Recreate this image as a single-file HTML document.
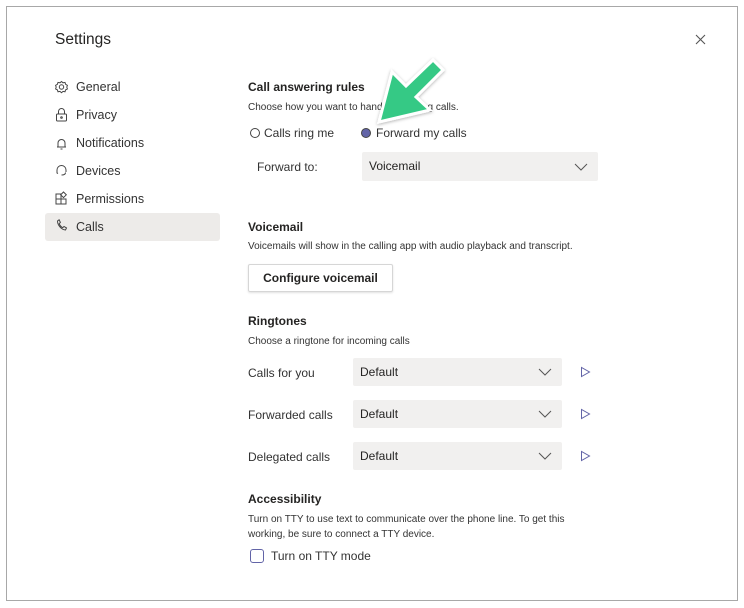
<!DOCTYPE html>
<html><head><style>
*{margin:0;padding:0;box-sizing:border-box}
body{width:744px;height:608px;background:#fff;font-family:"Liberation Sans",sans-serif;color:#252423;position:relative;overflow:hidden}
.frame{position:absolute;left:6px;top:6px;width:732px;height:595px;border:1px solid #a8a8a8}
.a{position:absolute;white-space:nowrap}
.nav{font-size:12.5px;color:#333}
.h{font-size:12px;font-weight:bold;color:#252423}
.s{font-size:10px;color:#333}
.l{font-size:12px;color:#333}
.dd{position:absolute;background:#f1f0ef;border-radius:2px;font-size:12px;color:#252423;padding-left:7px}
.dd svg{position:absolute;right:10px;top:50%;margin-top:-4px}
</style></head><body>
<div class="frame"></div>
<div class="a" style="left:55px;top:31px;font-size:15.5px;color:#252423">Settings</div>
<svg class="a" style="left:695px;top:34px" width="11" height="11"><path d="M1 1L10 10M10 1L1 10" stroke="#555" stroke-width="1.1"/></svg>

<div class="a" style="left:45px;top:213px;width:175px;height:28px;background:#edebe9;border-radius:3px"></div>
<svg class="a" style="left:54px;top:79px" width="16" height="160" fill="none" stroke="#444" stroke-width="1">
<circle cx="7.5" cy="8" r="2.2"/><path d="M7.5 2.5l1.5 1.3 2-.4.6 1.9 1.8 1-.6 1.8.6 1.8-1.8 1-.6 1.9-2-.4-1.5 1.3-1.5-1.3-2 .4-.6-1.9-1.8-1 .6-1.8-.6-1.8 1.8-1 .6-1.9 2 .4z"/>
<rect x="2.5" y="35" width="10" height="7" rx="1"/><path d="M4.5 35v-2.5a3 3 0 0 1 6 0V35"/><circle cx="7.5" cy="38.5" r=".8"/>
<path d="M3 68h9M4 68v-4a3.5 3.5 0 0 1 7 0v4M6.5 70h2"/>
<path d="M3 91a4.5 4.5 0 0 1 9 0v2M3 91v3l1 .5M11.5 93.5c0 1.5-1.5 2.5-4 2.5"/>
<rect x="2" y="120" width="5" height="5"/><rect x="2" y="115" width="5" height="5"/><rect x="7" y="120" width="5" height="5"/><path d="M9.5 113l2.8 2.8-2.8 2.8-2.8-2.8z"/>
<path d="M3.5 142c0 4 3.5 8.5 8 9l1-2-2.5-1.5-1.3 1.2c-1.5-.8-3-2.6-3.5-4l1.2-1.3-1.3-2.6z"/>
</svg>
<div class="a nav" style="left:76px;top:80px">General</div>
<div class="a nav" style="left:76px;top:108px">Privacy</div>
<div class="a nav" style="left:76px;top:136px">Notifications</div>
<div class="a nav" style="left:76px;top:164px">Devices</div>
<div class="a nav" style="left:76px;top:192px">Permissions</div>
<div class="a nav" style="left:76px;top:220px">Calls</div>

<div class="a h" style="left:248px;top:80px">Call answering rules</div>
<div class="a s" style="left:248px;top:102px">Choose how you want to handle incoming calls.</div>
<div class="a" style="left:250px;top:128px;width:10px;height:10px;border:1px solid #444;border-radius:50%"></div>
<div class="a l" style="left:264px;top:126px">Calls ring me</div>
<div class="a" style="left:361px;top:128px;width:10px;height:10px;border:1px solid #444;border-radius:50%;background:#6264a7"></div>
<div class="a l" style="left:376px;top:126px">Forward my calls</div>
<div class="a l" style="left:257px;top:160px">Forward to:</div>
<div class="dd" style="left:362px;top:152px;width:236px;height:29px;line-height:29px">Voicemail<svg width="14" height="8"><path d="M1 1l6 6 6-6" fill="none" stroke="#555"/></svg></div>

<div class="a h" style="left:248px;top:220px">Voicemail</div>
<div class="a s" style="left:248px;top:241px">Voicemails will show in the calling app with audio playback and transcript.</div>
<div class="a" style="left:248px;top:264px;width:145px;height:28px;border:1px solid #d6d6d6;border-radius:2px;box-shadow:0 1px 2px rgba(0,0,0,.12);font-size:12px;font-weight:bold;color:#252423;text-align:center;line-height:27px">Configure voicemail</div>

<div class="a h" style="left:248px;top:314px">Ringtones</div>
<div class="a s" style="left:248px;top:336px">Choose a ringtone for incoming calls</div>

<div class="a l" style="left:248px;top:366px">Calls for you</div>
<div class="dd" style="left:353px;top:358px;width:209px;height:28px;line-height:28px">Default<svg width="14" height="8"><path d="M1 1l6 6 6-6" fill="none" stroke="#555"/></svg></div>
<div class="a l" style="left:248px;top:408px">Forwarded calls</div>
<div class="dd" style="left:353px;top:400px;width:209px;height:28px;line-height:28px">Default<svg width="14" height="8"><path d="M1 1l6 6 6-6" fill="none" stroke="#555"/></svg></div>
<div class="a l" style="left:248px;top:450px">Delegated calls</div>
<div class="dd" style="left:353px;top:442px;width:209px;height:28px;line-height:28px">Default<svg width="14" height="8"><path d="M1 1l6 6 6-6" fill="none" stroke="#555"/></svg></div>
<svg class="a" style="left:580px;top:366px" width="12" height="100" fill="none" stroke="#6264a7" stroke-width="1"><path d="M1.5 1.5v9l8-4.5z"/><path d="M1.5 43.5v9l8-4.5z"/><path d="M1.5 85.5v9l8-4.5z"/></svg>

<div class="a h" style="left:248px;top:492px">Accessibility</div>
<div class="a s" style="left:248px;top:514px">Turn on TTY to use text to communicate over the phone line. To get this</div>
<div class="a s" style="left:248px;top:529px">working, be sure to connect a TTY device.</div>
<div class="a" style="left:250px;top:549px;width:14px;height:14px;border:1px solid #6264a7;border-radius:3px"></div>
<div class="a l" style="left:271px;top:549px">Turn on TTY mode</div>

<svg class="a" style="left:360px;top:50px" width="100" height="90">
<defs><filter id="f" x="-20%" y="-20%" width="140%" height="140%"><feDropShadow dx="0" dy="1" stdDeviation="1.5" flood-color="#000" flood-opacity=".3"/></filter></defs>
<polygon points="19,72 32,22 46,36 73,10 83,20 56,47 70,60" fill="#35c985" stroke="#fff" stroke-width="3" stroke-linejoin="miter" filter="url(#f)"/>
</svg>
</body></html>
